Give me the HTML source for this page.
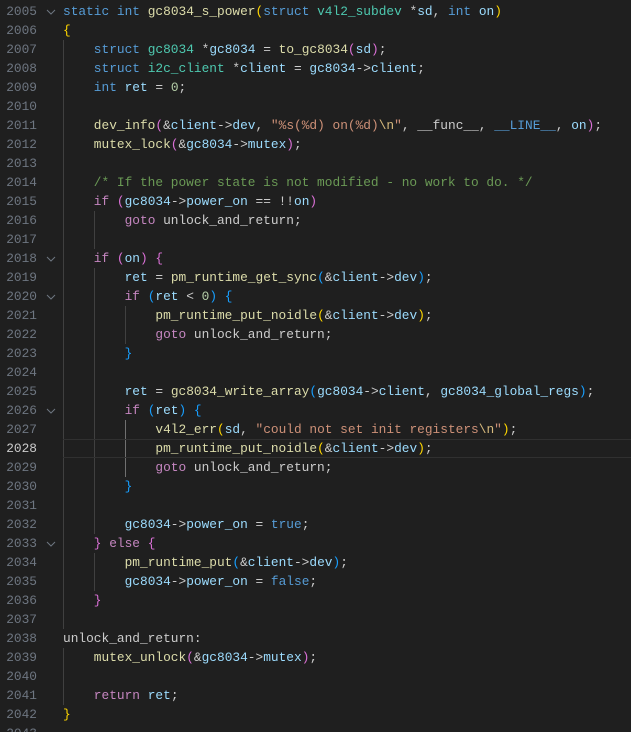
<!DOCTYPE html>
<html><head><meta charset="utf-8"><style>
html,body{margin:0;padding:0;background:#1f1f1f;width:631px;height:732px;overflow:hidden}
#ed{position:relative;padding-top:2px;font-family:"Liberation Mono",monospace;font-size:12.83px;color:#cccccc}
.l{position:relative;height:19px;line-height:19px;white-space:pre;padding-left:63px}
.n{position:absolute;left:0;width:37px;text-align:right;color:#6e7681}
.cur .n{color:#cccccc}
.cur:after{content:"";position:absolute;left:63px;right:0;top:0;height:17px;border-top:1px solid #303030;border-bottom:1px solid #303030}
.fd{position:absolute;left:46px;top:7px}
i{display:inline-block;width:30.8px;height:19px;vertical-align:top;box-shadow:inset 1px 0 #404040}
i.a{box-shadow:inset 1px 0 #707070}
.k{color:#569cd6}.c{color:#c586c0}.f{color:#dcdcaa}.v{color:#9cdcfe}.t{color:#4ec9b0}
.nu{color:#b5cea8}.s{color:#ce9178}.e{color:#d7ba7d}.m{color:#6a9955}
.b1{color:#ffd700}.b2{color:#da70d6}.b3{color:#179fff}
</style></head><body><div id="ed">
<div class="l"><span class="n">2005</span><svg class="fd" width="10" height="6"><path d="M1 1 L5 5 L9 1" stroke="#6e7681" fill="none" stroke-width="1"/></svg><span class="k">static</span> <span class="k">int</span> <span class="f">gc8034_s_power</span><span class="b1">(</span><span class="k">struct</span> <span class="t">v4l2_subdev</span> *<span class="v">sd</span>, <span class="k">int</span> <span class="v">on</span><span class="b1">)</span></div>
<div class="l"><span class="n">2006</span><span class="b1">{</span></div>
<div class="l"><span class="n">2007</span><i></i><span class="k">struct</span> <span class="t">gc8034</span> *<span class="v">gc8034</span> = <span class="f">to_gc8034</span><span class="b2">(</span><span class="v">sd</span><span class="b2">)</span>;</div>
<div class="l"><span class="n">2008</span><i></i><span class="k">struct</span> <span class="t">i2c_client</span> *<span class="v">client</span> = <span class="v">gc8034</span>-&gt;<span class="v">client</span>;</div>
<div class="l"><span class="n">2009</span><i></i><span class="k">int</span> <span class="v">ret</span> = <span class="nu">0</span>;</div>
<div class="l"><span class="n">2010</span><i></i></div>
<div class="l"><span class="n">2011</span><i></i><span class="f">dev_info</span><span class="b2">(</span>&amp;<span class="v">client</span>-&gt;<span class="v">dev</span>, <span class="s">"%s(%d) on(%d)<span class="e">\n</span>"</span>, __func__, <span class="k">__LINE__</span>, <span class="v">on</span><span class="b2">)</span>;</div>
<div class="l"><span class="n">2012</span><i></i><span class="f">mutex_lock</span><span class="b2">(</span>&amp;<span class="v">gc8034</span>-&gt;<span class="v">mutex</span><span class="b2">)</span>;</div>
<div class="l"><span class="n">2013</span><i></i></div>
<div class="l"><span class="n">2014</span><i></i><span class="m">/* If the power state is not modified - no work to do. */</span></div>
<div class="l"><span class="n">2015</span><i></i><span class="c">if</span> <span class="b2">(</span><span class="v">gc8034</span>-&gt;<span class="v">power_on</span> == !!<span class="v">on</span><span class="b2">)</span></div>
<div class="l"><span class="n">2016</span><i></i><i></i><span class="c">goto</span> unlock_and_return;</div>
<div class="l"><span class="n">2017</span><i></i><i></i></div>
<div class="l"><span class="n">2018</span><svg class="fd" width="10" height="6"><path d="M1 1 L5 5 L9 1" stroke="#6e7681" fill="none" stroke-width="1"/></svg><i></i><span class="c">if</span> <span class="b2">(</span><span class="v">on</span><span class="b2">)</span> <span class="b2">{</span></div>
<div class="l"><span class="n">2019</span><i></i><i></i><span class="v">ret</span> = <span class="f">pm_runtime_get_sync</span><span class="b3">(</span>&amp;<span class="v">client</span>-&gt;<span class="v">dev</span><span class="b3">)</span>;</div>
<div class="l"><span class="n">2020</span><svg class="fd" width="10" height="6"><path d="M1 1 L5 5 L9 1" stroke="#6e7681" fill="none" stroke-width="1"/></svg><i></i><i></i><span class="c">if</span> <span class="b3">(</span><span class="v">ret</span> &lt; <span class="nu">0</span><span class="b3">)</span> <span class="b3">{</span></div>
<div class="l"><span class="n">2021</span><i></i><i></i><i></i><span class="f">pm_runtime_put_noidle</span><span class="b1">(</span>&amp;<span class="v">client</span>-&gt;<span class="v">dev</span><span class="b1">)</span>;</div>
<div class="l"><span class="n">2022</span><i></i><i></i><i></i><span class="c">goto</span> unlock_and_return;</div>
<div class="l"><span class="n">2023</span><i></i><i></i><span class="b3">}</span></div>
<div class="l"><span class="n">2024</span><i></i><i></i></div>
<div class="l"><span class="n">2025</span><i></i><i></i><span class="v">ret</span> = <span class="f">gc8034_write_array</span><span class="b3">(</span><span class="v">gc8034</span>-&gt;<span class="v">client</span>, <span class="v">gc8034_global_regs</span><span class="b3">)</span>;</div>
<div class="l"><span class="n">2026</span><svg class="fd" width="10" height="6"><path d="M1 1 L5 5 L9 1" stroke="#6e7681" fill="none" stroke-width="1"/></svg><i></i><i></i><span class="c">if</span> <span class="b3">(</span><span class="v">ret</span><span class="b3">)</span> <span class="b3">{</span></div>
<div class="l"><span class="n">2027</span><i></i><i></i><i class="a"></i><span class="f">v4l2_err</span><span class="b1">(</span><span class="v">sd</span>, <span class="s">"could not set init registers<span class="e">\n</span>"</span><span class="b1">)</span>;</div>
<div class="l cur"><span class="n">2028</span><i></i><i></i><i class="a"></i><span class="f">pm_runtime_put_noidle</span><span class="b1">(</span>&amp;<span class="v">client</span>-&gt;<span class="v">dev</span><span class="b1">)</span>;</div>
<div class="l"><span class="n">2029</span><i></i><i></i><i class="a"></i><span class="c">goto</span> unlock_and_return;</div>
<div class="l"><span class="n">2030</span><i></i><i></i><span class="b3">}</span></div>
<div class="l"><span class="n">2031</span><i></i><i></i></div>
<div class="l"><span class="n">2032</span><i></i><i></i><span class="v">gc8034</span>-&gt;<span class="v">power_on</span> = <span class="k">true</span>;</div>
<div class="l"><span class="n">2033</span><svg class="fd" width="10" height="6"><path d="M1 1 L5 5 L9 1" stroke="#6e7681" fill="none" stroke-width="1"/></svg><i></i><span class="b2">}</span> <span class="c">else</span> <span class="b2">{</span></div>
<div class="l"><span class="n">2034</span><i></i><i></i><span class="f">pm_runtime_put</span><span class="b3">(</span>&amp;<span class="v">client</span>-&gt;<span class="v">dev</span><span class="b3">)</span>;</div>
<div class="l"><span class="n">2035</span><i></i><i></i><span class="v">gc8034</span>-&gt;<span class="v">power_on</span> = <span class="k">false</span>;</div>
<div class="l"><span class="n">2036</span><i></i><span class="b2">}</span></div>
<div class="l"><span class="n">2037</span><i></i></div>
<div class="l"><span class="n">2038</span>unlock_and_return:</div>
<div class="l"><span class="n">2039</span><i></i><span class="f">mutex_unlock</span><span class="b2">(</span>&amp;<span class="v">gc8034</span>-&gt;<span class="v">mutex</span><span class="b2">)</span>;</div>
<div class="l"><span class="n">2040</span><i></i></div>
<div class="l"><span class="n">2041</span><i></i><span class="c">return</span> <span class="v">ret</span>;</div>
<div class="l"><span class="n">2042</span><span class="b1">}</span></div>
<div class="l"><span class="n">2043</span></div>
</div></body></html>
